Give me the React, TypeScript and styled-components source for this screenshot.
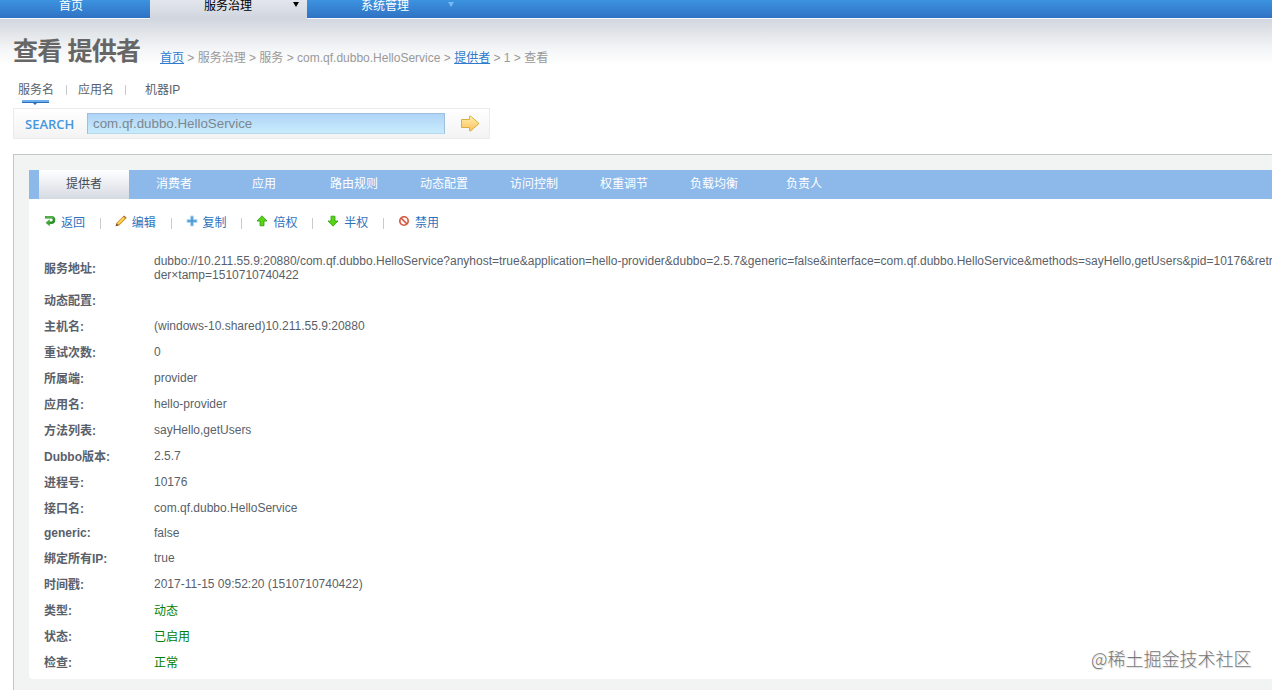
import React from "react";
import styled, { createGlobalStyle } from "styled-components";

const GlobalStyle = createGlobalStyle`
  * { box-sizing: border-box; }
  html, body { margin: 0; padding: 0; background: #fff; overflow: hidden; }
  body {
    font-family: "Liberation Sans", "Noto Sans CJK SC", sans-serif;
    font-size: 12px;
    color: #5a5f6a;
  }
`;

const Page = styled.div`
  position: relative;
  width: 100%;
  height: 690px;
  overflow: hidden;
  display: flex;
  flex-direction: column;
  background: linear-gradient(#d0d5de 18px, #e1e4e8 32px, #f5f6f7 50px, #fff 66px);
`;

const MainNav = styled.nav`
  display: flex;
  flex: none;
  height: 19px;
`;

const MainTab = styled.div<{ $w?: number; $active?: boolean; $pad?: number }>`
  display: flex;
  align-items: center;
  justify-content: space-between;
  ${(p) => (p.$w ? `width: ${p.$w}px;` : "flex: 1;")}
  height: 19px;
  padding: 0 8px ${(p) => (p.$active ? 7 : 6)}px ${(p) => p.$pad ?? 0}px;
  color: ${(p) => (p.$active ? "#000" : "#fff")};
  background: ${(p) =>
    p.$active ? "linear-gradient(#e3e6ec, #d0d5de)" : "linear-gradient(#3c93df, #2f72c4)"};
  border-bottom: ${(p) => (p.$active ? "0" : "1px solid #f4f7fb")};
  line-height: 10px;
`;

const Caret = styled.i<{ $color: string; $gap?: number }>`
  border: 3px solid transparent;
  border-top: 5px solid ${(p) => p.$color};
  border-bottom: 0;
  margin-left: ${(p) => p.$gap ?? 0}px;
  margin-top: -3px;
`;

const NavGroup = styled.span`
  display: flex;
  align-items: center;
`;

const Heading = styled.header`
  display: flex;
  align-items: flex-start;
  flex: none;
  height: 61px;
  padding-left: 13px;
`;

const Title = styled.h1`
  margin: 13px 0 0;
  width: 147px;
  font-size: 25px;
  line-height: 38px;
  font-weight: 700;
  color: #666;
  white-space: nowrap;
  letter-spacing: -0.8px;
`;

const Crumbs = styled.div`
  margin-top: 31px;
  line-height: 17px;
  color: #999;
  white-space: nowrap;
  a { color: #2e7bcf; text-decoration: underline; }
`;

const FilterTabs = styled.div`
  display: flex;
  flex: none;
  height: 28px;
  padding-left: 18px;
  line-height: 21px;
  color: #5a5f6a;
`;

const FilterTab = styled.span<{ $w: number }>`
  position: relative;
  width: ${(p) => p.$w}px;
  white-space: nowrap;
`;

const Marker = styled.i`
  position: absolute;
  left: 4px;
  top: 20px;
  width: 27px;
  height: 3px;
  background: linear-gradient(#6db0ee 66%, #2a6fb8 66%);
  &::after {
    content: "";
    position: absolute;
    left: 11px;
    top: 3px;
    border: 2px solid transparent;
    border-top-color: #2a6fb8;
    border-bottom: 0;
  }
`;

const Bar = styled.i<{ $w: number; $tall?: boolean }>`
  width: ${(p) => p.$w}px;
  height: ${(p) => (p.$tall ? 11 : 10)}px;
  border-left: 1px solid #c8cacc;
  margin-top: ${(p) => (p.$tall ? 4 : 5)}px;
`;

const Search = styled.div`
  display: flex;
  align-items: center;
  flex: none;
  width: 477px;
  height: 31px;
  margin-left: 13px;
  border: 1px solid #ebebeb;
  background: linear-gradient(#fff, #f3f3f3);
`;

const SearchLabel = styled.label`
  width: 73px;
  padding-left: 11px;
  font-family: "Open Sans", sans-serif;
  font-size: 13px;
  line-height: 20px;
  font-weight: 600;
  color: #4596e0;
`;

const SearchField = styled.div`
  width: 358px;
  height: 21px;
  padding-left: 5px;
  border: 1px solid #9dbfdc;
  border-bottom-color: #b5d8ea;
  background: linear-gradient(#b0d4f7, #c8ecfc);
  font-size: 13.33px;
  line-height: 20px;
  color: #7c8790;
`;

const Go = styled.div`
  display: flex;
  margin-left: 15px;
`;

const Panel = styled.main`
  flex: none;
  width: 1300px;
  height: 560px;
  margin: 15px 0 0 13px;
  padding: 15px 0 0 15px;
  border: 1px solid #c3c6c8;
  background: #f2f3f3;
`;

const Card = styled.section`
  height: 509px;
  background: #fff;
  border-radius: 0 0 0 4px;
`;

const Tabs = styled.div`
  display: flex;
  height: 29px;
  padding-left: 10px;
  background: #8cb9ea;
`;

const Tab = styled.div<{ $active?: boolean }>`
  width: 90px;
  line-height: 28px;
  text-align: center;
  color: ${(p) => (p.$active ? "#444b57" : "#fff")};
  background: ${(p) => (p.$active ? "linear-gradient(#fff, #d5dae2)" : "none")};
`;

const Actions = styled.div`
  display: flex;
  height: 51px;
  padding: 15px 0 0 15px;
  color: #2e72bd;
  line-height: 18px;
`;

const Action = styled.a`
  display: flex;
  width: 55.8px;
  svg { margin: 1px 5px 0 0; flex: none; }
`;

const Row = styled.div<{ $h: number }>`
  display: flex;
  align-items: center;
  height: ${(p) => p.$h}px;
  padding-left: 15px;
  line-height: 14px;
  white-space: nowrap;
`;

const Key = styled.div<{ $shift: number }>`
  width: 110px;
  padding-top: ${(p) => Math.max(p.$shift, 0)}px;
  padding-bottom: ${(p) => Math.max(-p.$shift, 0)}px;
  font-weight: 700;
`;

const Value = styled.div<{ $ok?: boolean }>`
  color: ${(p) => (p.$ok ? "#008000" : "inherit")};
  padding-top: ${(p) => (p.$ok ? 2 : 0)}px;
  padding-bottom: ${(p) => (p.$ok ? 0 : 1)}px;
`;

const Watermark = styled.div`
  position: absolute;
  left: 1091px;
  top: 645px;
  font-family: "Noto Sans CJK SC", sans-serif;
  font-size: 18px;
  font-weight: 300;
  line-height: 26px;
  color: #777;
  text-shadow: 1px 1px 1px #d4d4d4;
  white-space: nowrap;
`;

const ReturnIcon = () => (
  <svg width="12" height="12" viewBox="0 0 12 12">
    <path d="M1 2.3H7.3a2.7 2.7 0 0 1 0 5.4H5" fill="none" stroke="#2f8f2b" strokeWidth="2.6" />
    <path d="M5.8 4.2V11.2L1.6 7.7z" fill="#3fa838" />
    <path d="M1.3 2H7.3a2.6 2.6 0 0 1 2.2 1.4" fill="none" stroke="#77cf62" strokeWidth="1" />
  </svg>
);
const PencilIcon = () => (
  <svg width="12" height="12" viewBox="0 0 12 12">
    <path d="M1.6 8.2 8.6 1.2l2.2 2.2-7 7z" fill="#f5bd2f" stroke="#b97a18" strokeWidth=".7" />
    <path d="m8.2 1.4 1-1 2.3 2.3-1 1z" fill="#a6672f" />
    <path d="M1.6 8.2 .5 11.3l3.2-.9z" fill="#6b4a2a" />
    <path d="m3 8.6 6-6" stroke="#ffe68a" />
  </svg>
);
const PlusIcon = () => (
  <svg width="12" height="12" viewBox="0 0 12 12">
    <path d="M4.6 1h2.8v3.6H11v2.8H7.4V11H4.6V7.4H1V4.6h3.6z" fill="#6db4e3" stroke="#a8d2ef" strokeWidth=".8" />
    <path d="M6 2v8M2 6h8" stroke="#4992cb" strokeWidth="1" />
  </svg>
);
const UpIcon = ({ down = false }: { down?: boolean }) => (
  <svg width="12" height="12" viewBox="0 0 12 12">
    <path
      transform={down ? "rotate(180 6 6)" : undefined}
      d="M6 .8 11 6H8v4.8H4V6H1z"
      fill="#57d514"
      stroke="#2f9c12"
      strokeWidth=".8"
    />
  </svg>
);
const BanIcon = () => (
  <svg width="12" height="12" viewBox="0 0 12 12">
    <circle cx="6" cy="6" r="4.2" fill="#fff4ef" stroke="#d3543b" strokeWidth="1.6" />
    <path d="m3 3 6 6" stroke="#d3543b" strokeWidth="1.6" />
  </svg>
);

const ArrowIcon = () => (
  <svg width="20" height="17" viewBox="0 0 20 17">
    <defs>
      <linearGradient id="gold" x1="0" y1="0" x2="0" y2="1">
        <stop offset="0" stopColor="#fff0a8" />
        <stop offset="1" stopColor="#fbc062" />
      </linearGradient>
    </defs>
    <path d="M1.5 4.5h8V1.2h1.3l8.3 7.3-8.3 7.3H9.5v-3.3h-8z" fill="url(#gold)" stroke="#d9b040" />
  </svg>
);

const tabs = ["提供者", "消费者", "应用", "路由规则", "动态配置", "访问控制", "权重调节", "负载均衡", "负责人"];

const actions: [string, React.ReactNode][] = [
  ["返回", <ReturnIcon />],
  ["编辑", <PencilIcon />],
  ["复制", <PlusIcon />],
  ["倍权", <UpIcon />],
  ["半权", <UpIcon down />],
  ["禁用", <BanIcon />],
];

const keyShift: Record<string, number> = { generic: -1, 服务地址: 1, 绑定所有IP: 0 };

const rows: [string, React.ReactNode, number, boolean?][] = [
  [
    "服务地址",
    <>
      dubbo://10.211.55.9:20880/com.qf.dubbo.HelloService?anyhost=true&amp;application=hello-provider&amp;dubbo=2.5.7&amp;generic=false&amp;interface=com.qf.dubbo.HelloService&amp;methods=sayHello,getUsers&amp;pid=10176&amp;retries=0
      <br />
      der×tamp=1510710740422
    </>,
    37,
  ],
  ["动态配置", "", 26],
  ["主机名", "(windows-10.shared)10.211.55.9:20880", 26],
  ["重试次数", "0", 26],
  ["所属端", "provider", 26],
  ["应用名", "hello-provider", 26],
  ["方法列表", "sayHello,getUsers", 26],
  ["Dubbo版本", "2.5.7", 26],
  ["进程号", "10176", 26],
  ["接口名", "com.qf.dubbo.HelloService", 26],
  ["generic", "false", 25],
  ["绑定所有IP", "true", 25],
  ["时间戳", "2017-11-15 09:52:20 (1510710740422)", 26],
  ["类型", "动态", 26, true],
  ["状态", "已启用", 26, true],
  ["检查", "正常", 26, true],
];

export default function App() {
  return (
    <Page>
      <GlobalStyle />
      <MainNav>
        <MainTab $w={150} $pad={59}>首页</MainTab>
        <MainTab $w={157} $pad={54} $active>
          服务治理
          <Caret $color="#000" />
        </MainTab>
        <MainTab $pad={54}>
          <NavGroup>
            系统管理
            <Caret $color="#79b9f2" $gap={39} />
          </NavGroup>
        </MainTab>
      </MainNav>
      <Heading>
        <Title>查看 提供者</Title>
        <Crumbs>
          <a>首页</a> &gt; 服务治理 &gt; 服务 &gt; com.qf.dubbo.HelloService &gt; <a>提供者</a> &gt; 1 &gt; 查看
        </Crumbs>
      </Heading>
      <FilterTabs>
        <FilterTab $w={48}>
          服务名
          <Marker />
        </FilterTab>
        <Bar $w={12} />
        <FilterTab $w={47}>应用名</FilterTab>
        <Bar $w={20} />
        <FilterTab $w={50}>机器IP</FilterTab>
      </FilterTabs>
      <Search>
        <SearchLabel>SEARCH</SearchLabel>
        <SearchField>com.qf.dubbo.HelloService</SearchField>
        <Go>
          <ArrowIcon />
        </Go>
      </Search>
      <Panel>
        <Card>
          <Tabs>
            {tabs.map((t, i) => (
              <Tab key={t} $active={i === 0}>{t}</Tab>
            ))}
          </Tabs>
          <Actions>
            {actions.map(([t, icon], i) => (
              <React.Fragment key={t}>
                {i > 0 && <Bar $w={15} $tall />}
                <Action>
                  {icon}
                  {t}
                </Action>
              </React.Fragment>
            ))}
          </Actions>
          {rows.map(([k, v, h, ok]) => (
            <Row key={k} $h={h}>
              <Key $shift={keyShift[k] ?? 2}>{k}:</Key>
              <Value $ok={ok}>{v}</Value>
            </Row>
          ))}
        </Card>
      </Panel>
      <Watermark>@稀土掘金技术社区</Watermark>
    </Page>
  );
}
